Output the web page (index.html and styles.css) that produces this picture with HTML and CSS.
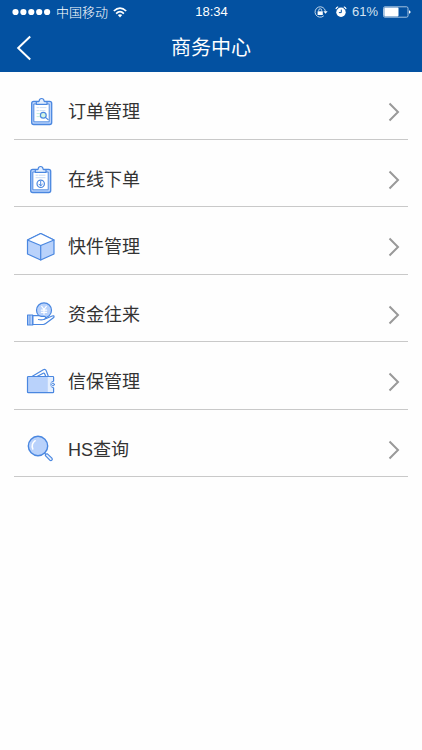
FILE: index.html
```
<!DOCTYPE html>
<html lang="zh-CN">
<head>
    <meta charset="UTF-8">
    <meta name="viewport" content="width=device-width, initial-scale=1">
    <title>商务中心</title>
    <link rel="stylesheet" href="styles.css">
</head>
<body>
    <header class="header">
        <div class="status">
            <div class="status-left">
                <svg class="signal" width="39" height="8" viewBox="0 0 39 8" fill="#fff">
                    <circle cx="3.5" cy="4" r="3.1"/>
                    <circle cx="11.4" cy="4" r="3.1"/>
                    <circle cx="19.3" cy="4" r="3.1"/>
                    <circle cx="27.2" cy="4" r="3.1"/>
                    <circle cx="35.1" cy="4" r="3.1"/>
                </svg>
                <span class="carrier">中国移动</span>
                <svg width="14" height="11" viewBox="0 0 14 11" fill="none" stroke="#fff" stroke-width="1.7">
                    <path d="M.8 4Q7-1.8 13.2 4"/>
                    <path d="M3.1 6.6Q7 2.8 10.9 6.6"/>
                    <path d="M4.8 8.1Q7 6.3 9.2 8.1L7 10.5z" fill="#fff" stroke="none"/>
                </svg>
            </div>
            <time class="clock">18:34</time>
            <div class="status-right">
                <svg width="16" height="12" viewBox="0 0 16 12" fill="none" stroke="#d5e3f1">
                    <path d="M11.4 5.2A5.2 5.2 0 1 0 9.8 9.8" stroke-width=".9"/>
                    <path d="M9.4 5.2h4.2l-2.1 2.6z" fill="#fff" stroke="none"/>
                    <rect x="3.6" y="5.3" width="5.2" height="3.7" fill="#fff" stroke="none"/>
                    <path d="M4.7 5.5V4.3a1.5 1.5 0 0 1 3 0v1.2" stroke-width=".9"/>
                </svg>
                <svg width="12" height="12" viewBox="0 0 12 12">
                    <circle cx="6" cy="6.3" r="4.7" fill="#fff"/>
                    <path d="M.9 3.2Q1.3 1.3 3.2.9M8.8.9Q10.7 1.3 11.1 3.2" fill="none" stroke="#fff" stroke-width="1.2"/>
                    <path d="M6.3 3.6v3H3.9" fill="none" stroke="#0351a1"/>
                </svg>
                <span class="percent">61%</span>
                <svg width="28" height="12" viewBox="0 0 28 12">
                    <rect x=".5" y=".8" width="24.5" height="10.4" rx="1.5" fill="none" stroke="#b9d0e8" stroke-width=".9"/>
                    <rect x="1.3" y="1.6" width="14.2" height="8.8" rx=".8" fill="#fff"/>
                    <path d="M26 4.2q1.6.6 1.6 1.8T26 7.8z" fill="#fff"/>
                </svg>
            </div>
        </div>
        <div class="navbar">
            <button type="button" class="back" aria-label="返回">
                <svg width="16" height="26" viewBox="0 0 16 26" fill="none" stroke="#fff" stroke-width="2">
                    <path d="M14.2 1.5L2.2 13l12 11.5"/>
                </svg>
            </button>
            <h1 class="title">商务中心</h1>
        </div>
    </header>

    <main>
        <ul class="menu">
            <li class="item">
                <a href="#orders" class="link">
                    <svg class="icon" viewBox="0 0 30 30">
                        <rect x="5.7" y="4.3" width="20" height="23.2" rx="2" fill="#b9d2fb" stroke-width="1.3"/>
                        <rect x="8.2" y="7" width="15" height="17.8" fill="#fff" stroke-width=".9"/>
                        <path d="M10.3 7.3V4.6h2.4q.5 0 .5-.8.2-2.3 2.4-2.3T18 3.8q0 .8.6.8H21v2.7z" fill="#e5effe"/>
                        <path d="M11 10.6h1.5M14 10.6h6M11 13.6h1.5M14 13.6h5" stroke="#c2d5f3" stroke-width=".8"/>
                        <path d="M11 16.6h3M11 19.6h3" stroke="#b5ead0" stroke-width=".8"/>
                        <circle cx="17.3" cy="18.2" r="2.9" fill="#d3f5e2"/>
                        <path d="M19.5 20.4l2.6 2.2"/>
                    </svg>
                    <span class="label">订单管理</span>
                    <svg class="arrow" viewBox="0 0 12 20"><path d="M1.5 1.5L10 10l-8.500 8.500"/></svg>
                </a>
            </li>
            <li class="item">
                <a href="#new-order" class="link">
                    <svg class="icon" viewBox="0 0 30 30">
                        <rect x="4.7" y="4.3" width="20" height="23.2" rx="2" fill="#b9d2fb" stroke-width="1.3"/>
                        <rect x="7.2" y="7" width="15" height="17.8" fill="#fff" stroke-width=".9"/>
                        <path d="M9.3 7.3V4.6h2.4q.5 0 .5-.8.2-2.3 2.4-2.3T17 3.8q0 .8.6.8H20v2.7z" fill="#e5effe"/>
                        <path d="M10 10.2h1.5M13 10.2h6M10 12.7h9" stroke="#b9cff2" stroke-width=".8"/>
                        <circle cx="14.7" cy="18.8" r="3.7"/>
                        <path d="M14.7 16.4v4.3M13 19.2l1.7 1.7 1.7-1.7" stroke-width="1"/>
                    </svg>
                    <span class="label">在线下单</span>
                    <svg class="arrow" viewBox="0 0 12 20"><path d="M1.5 1.5L10 10l-8.500 8.500"/></svg>
                </a>
            </li>
            <li class="item">
                <a href="#express" class="link">
                    <svg class="icon" viewBox="0 0 30 30">
                        <path d="M14.7 1.5L28 8v14l-13.300 6L1.500 22V8z" fill="#b9d2fb"/>
                        <path d="M14.7 1.5L28 8l-13.300 5.500L1.500 8z" fill="#fff"/>
                        <path d="M14.7 13.5V28"/>
                    </svg>
                    <span class="label">快件管理</span>
                    <svg class="arrow" viewBox="0 0 12 20"><path d="M1.5 1.5L10 10l-8.500 8.500"/></svg>
                </a>
            </li>
            <li class="item">
                <a href="#funds" class="link">
                    <svg class="icon" viewBox="0 0 30 30">
                        <circle cx="18" cy="10.3" r="7.5" fill="#b9d2fb"/>
                        <path d="M15.7 6.3L18 9.500l2.300-3.200M18 9.500v4.800M15.400 10.200h5.200M15.400 12.300h5.200" stroke="#fff"/>
                        <path d="M6.7 15.600h5.800q1.500 0 2.500.8h3.200q1.600.2 1.600 1.500 0 1-1.400 1.300l7.800-3.200q1.600-.5 1.900.5.2.6-.7 1.300l-7.700 5.800q-1.200.9-2.500.9H6.700z" fill="#fff"/>
                        <path d="M12.500 19.500q3 .8 5.900-.3"/>
                        <rect x="1.6" y="15" width="5.1" height="10" fill="#b9d2fb"/>
                        <path d="M3.9 15.500v9" stroke-width=".7"/>
                    </svg>
                    <span class="label">资金往来</span>
                    <svg class="arrow" viewBox="0 0 12 20"><path d="M1.5 1.5L10 10l-8.500 8.500"/></svg>
                </a>
            </li>
            <li class="item">
                <a href="#credit" class="link">
                    <svg class="icon" viewBox="0 0 30 30">
                        <path d="M6 9.500l11.300-6.700q2-1 2.900 1l2.200 5.700"/>
                        <path d="M11 9.500l6.200-3.300q.9-.4 1.300.4l1.300 2.900"/>
                        <path d="M2.500 9.500h24.300q.8 0 .8.800v3.800a3.400 3.400 0 0 0 0 6.800v4q0 .8-.8.800H2.300q-.8 0-.8-.8V10.300q0-.8 1-.8z" fill="#b9d2fb"/>
                        <path d="M21.800 10.100H27v3.700a3.900 3.900 0 0 0 0 7.400v3.900h-5.200z" fill="#e5effe" stroke="none"/>
                        <circle cx="27" cy="17.500" r="1.400" fill="#fff" stroke-width="1"/>
                    </svg>
                    <span class="label">信保管理</span>
                    <svg class="arrow" viewBox="0 0 12 20"><path d="M1.5 1.5L10 10l-8.500 8.500"/></svg>
                </a>
            </li>
            <li class="item">
                <a href="#hs" class="link">
                    <svg class="icon" viewBox="0 0 30 30">
                        <circle cx="12" cy="11" r="9.700" fill="#b9d2fb" stroke-width="1.400"/>
                        <path d="M6.800 14Q4.900 9 9.200 5.700" stroke="#fff" stroke-width="1.500"/>
                        <path d="M18.600 18.200l1.700 1.700"/>
                        <path d="M19.400 20.700q-.4-2.100 2-1.800l4.500 4.200q.9 1.100 0 2t-2.100.1z" fill="#e5effe"/>
                    </svg>
                    <span class="label">HS查询</span>
                    <svg class="arrow" viewBox="0 0 12 20"><path d="M1.5 1.5L10 10l-8.500 8.500"/></svg>
                </a>
            </li>
        </ul>
    </main>
</body>
</html>
```
FILE: styles.css
```
body {
    margin: 0;
    background-color: #fefefe;
    color: #333;
    font-family: "Liberation Sans", "Noto Sans CJK SC", sans-serif;
}
.header {
    background-color: #0351a1;
    color: #fff;
}
.status {
    display: grid;
    grid-template-columns: 1fr auto 1fr;
    align-items: center;
    height: 24px;
    padding: 0 11px 0 12px;
    font-size: 13px;
    line-height: 24px;
}
.status-left,
.status-right {
    display: flex;
    align-items: center;
    gap: 5px;
}
.status-right {
    justify-content: flex-end;
}
.carrier {
    font-weight: 300;
    font-family: "Noto Sans CJK SC", sans-serif;
}
.percent {
    color: #d5e3f1;
}
.navbar {
    display: grid;
    grid-template-columns: 48px 1fr 48px;
    align-items: center;
    height: 48px;
}
.back {
    display: flex;
    align-items: center;
    height: 48px;
    padding: 0 0 0 16px;
    border: none;
    background: none;
    cursor: pointer;
}
.title {
    margin: 0;
    font-size: 20px;
    font-weight: normal;
    line-height: 48px;
    text-align: center;
}
.menu {
    display: grid;
    grid-auto-rows: 1fr;
    min-height: 405px;
    margin: 0 14px;
    padding: 0;
    list-style: none;
}
.item {
    display: flex;
    border-bottom: 1px solid #c9c9c9;
}
.link {
    display: flex;
    flex: 1;
    align-items: center;
    gap: 12px;
    padding: 14px 8px 0 12px;
    color: inherit;
    text-decoration: none;
}
.icon {
    width: 30px;
    height: 30px;
    fill: none;
    stroke: #4a87e0;
    stroke-width: 1.2;
    stroke-linecap: round;
    stroke-linejoin: round;
}
.label {
    flex: 1;
    font-size: 18px;
    line-height: 28px;
}
.arrow {
    width: 12px;
    height: 20px;
    fill: none;
    stroke: #999;
    stroke-width: 2;
}
```
